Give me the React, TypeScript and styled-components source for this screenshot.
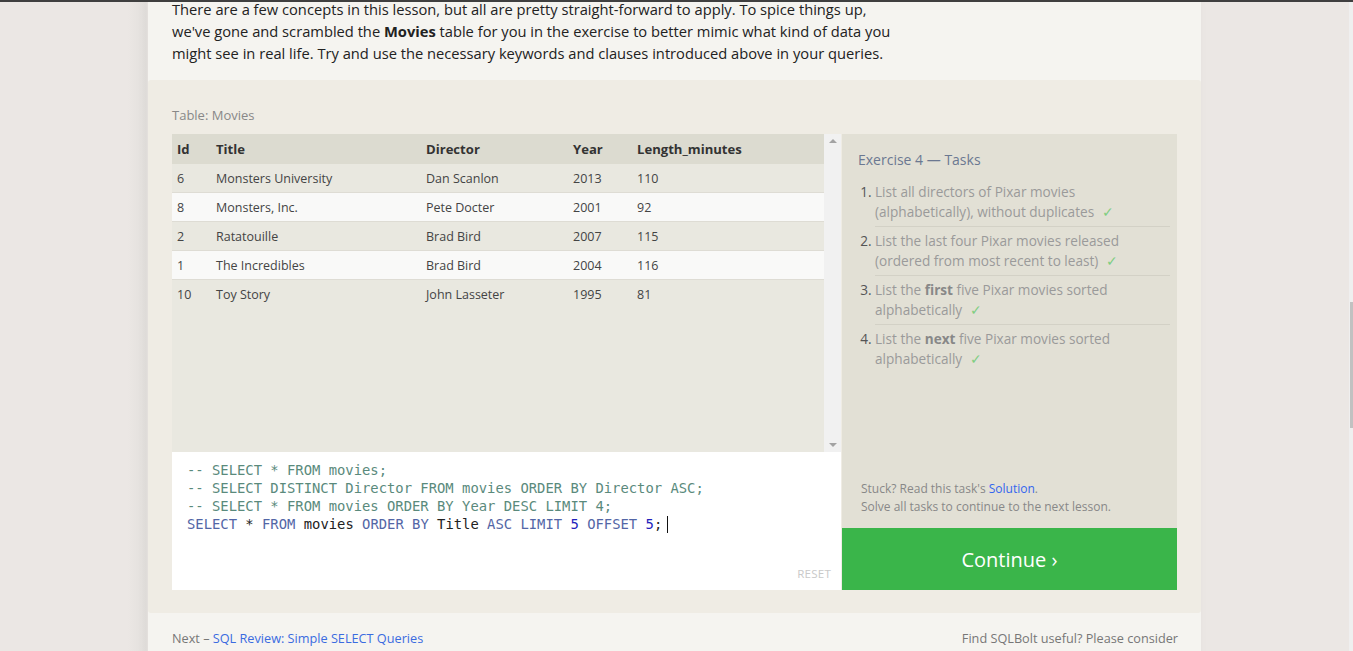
import React from "react";
import styled, { createGlobalStyle } from "styled-components";

const Global = createGlobalStyle`
  html, body { margin: 0; padding: 0; }
  body {
    background: #ebe7e4;
    font-family: "Open Sans", "Noto Sans", sans-serif;
    overflow: hidden;
    height: 651px;
  }
`;

const TopEdge = styled.div`
  position: fixed;
  top: 0;
  left: 0;
  right: 0;
  height: 2px;
  background: #3f3f3f;
  z-index: 10;
`;

const PageScroll = styled.div`
  position: fixed;
  top: 2px;
  right: 0;
  width: 4px;
  bottom: 0;
  background: #efefef;
  z-index: 10;
`;

const PageThumb = styled.div`
  position: absolute;
  right: 0;
  width: 3px;
  top: 300px;
  height: 126px;
  background: #c1c1c1;
`;

const Page = styled.div`
  display: flex;
  justify-content: flex-start;
  padding-left: 148px;
  background: linear-gradient(to right, #ebe7e4 0, #ebe7e4 128px, #e2dfdc 146px, #ebe7e4 148px);
`;

const Column = styled.div`
  width: 1053px;
  background: #f5f4f0;
  box-shadow: -2px 0 10px rgba(0, 0, 0, 0.04);
`;

const Intro = styled.p`
  margin: -2px 0 0 0;
  padding: 0 24px 16px 24px;
  width: 732px;
  font-size: 14.7px;
  line-height: 22px;
  color: #222;
`;

const Exercise = styled.section`
  background: #efece4;
  border-radius: 3px;
  padding: 26px 24px 23px 24px;
`;

const TableLabel = styled.div`
  font-size: 13px;
  line-height: 18px;
  color: #888;
  margin-bottom: 10px;
`;

const Workspace = styled.div`
  display: flex;
  justify-content: space-between;
`;

const LeftPane = styled.div`
  width: 669px;
  display: flex;
  flex-direction: column;
`;

const TableBox = styled.div`
  height: 318px;
  display: flex;
  background: #e9e8e0;
`;

const TableArea = styled.div`
  flex: 1;
`;

const DataTable = styled.table`
  width: 100%;
  border-collapse: collapse;
  font-size: 12.5px;
  color: #444;
`;

const HeadCell = styled.th<{ $w?: number }>`
  text-align: left;
  background: #dcdbd0;
  font-weight: 700;
  font-size: 13.1px;
  color: #333;
  height: 30px;
  padding: 0 5px;
  width: ${(p) => (p.$w ? `${p.$w}px` : "auto")};
  box-sizing: border-box;
`;

const Row = styled.tr<{ $light: boolean }>`
  background: ${(p) => (p.$light ? "#f9f9f8" : "#e9e8e0")};
  border-bottom: 1px solid #dedcd4;
  &:last-child { border-bottom-color: transparent; }
`;

const Cell = styled.td`
  height: 28px;
  padding: 0 5px;
  color: #444;
`;

const ScrollBar = styled.div`
  width: 17px;
  background: #f1f1f1;
  display: flex;
  flex-direction: column;
  justify-content: space-between;
  align-items: center;
  padding: 5px 0;
  box-sizing: border-box;
`;

const Arrow = styled.div<{ $down?: boolean }>`
  width: 0;
  height: 0;
  border-left: 4px solid transparent;
  border-right: 4px solid transparent;
  ${(p) =>
    p.$down
      ? "border-top: 4px solid #a3a3a3;"
      : "border-bottom: 4px solid #a3a3a3;"}
`;

const Editor = styled.div`
  height: 138px;
  background: #fff;
  position: relative;
  padding: 9px 15px;
  box-sizing: border-box;
`;

const Code = styled.pre`
  margin: 0;
  font-family: "DejaVu Sans Mono", "Liberation Mono", monospace;
  font-size: 13.85px;
  line-height: 18px;
  color: #222;
`;

const Comment = styled.span`
  color: #5a8a7c;
`;

const Kw = styled.span`
  color: #5366a6;
`;

const Num = styled.span`
  color: #2222bb;
`;

const Caret = styled.span`
  display: inline-block;
  width: 1px;
  height: 17px;
  background: #111;
  vertical-align: -4px;
  margin-left: 5px;
`;

const Reset = styled.div`
  position: absolute;
  right: 10px;
  bottom: 9px;
  font-size: 11.6px;
  color: #c9c9c9;
  letter-spacing: 0.2px;
`;

const RightPane = styled.div`
  width: 335px;
  display: flex;
  flex-direction: column;
`;

const Tasks = styled.div`
  flex: 1;
  background: #e2e0d5;
  padding: 17px 7px 12px 16px;
  display: flex;
  flex-direction: column;
`;

const TasksTitle = styled.h3`
  margin: 0 0 9px 0;
  font-weight: 400;
  font-size: 14px;
  line-height: 18px;
  color: #6b7891;
`;

const TaskList = styled.ol`
  margin: 0;
  padding: 0 0 0 17px;
  font-size: 13.6px;
  line-height: 20px;
  color: #9a9a9a;
`;

const Task = styled.li<{ $last?: boolean }>`
  padding: 4px 0 4px 0;
  border-bottom: ${(p) => (p.$last ? "none" : "1px solid #d3d1c6")};
  &::marker { color: #555; }
  b { color: #888; }
`;

const Check = styled.span`
  color: #7fce82;
  margin-left: 8px;
`;

const Stuck = styled.div`
  margin-top: auto;
  font-size: 12px;
  line-height: 18px;
  color: #888;
  padding-left: 3px;
  a { color: #3366ee; text-decoration: none; }
`;

const ContinueButton = styled.button`
  height: 62px;
  border: none;
  background: #3ab54a;
  color: #fff;
  font-family: inherit;
  font-size: 20px;
  cursor: pointer;
`;

const Footer = styled.footer`
  display: flex;
  justify-content: space-between;
  padding: 16px 23px 0 24px;
  font-size: 12.7px;
  line-height: 18px;
  color: #777;
  height: 38px;
  a { color: #3a6be0; text-decoration: none; }
`;

const rows = [
  ["6", "Monsters University", "Dan Scanlon", "2013", "110"],
  ["8", "Monsters, Inc.", "Pete Docter", "2001", "92"],
  ["2", "Ratatouille", "Brad Bird", "2007", "115"],
  ["1", "The Incredibles", "Brad Bird", "2004", "116"],
  ["10", "Toy Story", "John Lasseter", "1995", "81"],
];

export default function App() {
  return (
    <>
      <Global />
      <TopEdge />
      <PageScroll>
        <PageThumb />
      </PageScroll>
      <Page>
        <Column>
          <Intro>
            There are a few concepts in this lesson, but all are pretty straight-forward to apply. To
            spice things up, we've gone and scrambled the <b>Movies</b> table for you in the exercise
            to better mimic what kind of data you might see in real life. Try and use the necessary
            keywords and clauses introduced above in your queries.
          </Intro>
          <Exercise>
            <TableLabel>Table: Movies</TableLabel>
            <Workspace>
              <LeftPane>
                <TableBox>
                  <TableArea>
                    <DataTable>
                      <thead>
                        <tr>
                          <HeadCell $w={39}>Id</HeadCell>
                          <HeadCell $w={210}>Title</HeadCell>
                          <HeadCell $w={147}>Director</HeadCell>
                          <HeadCell $w={64}>Year</HeadCell>
                          <HeadCell>Length_minutes</HeadCell>
                        </tr>
                      </thead>
                      <tbody>
                        {rows.map((r, i) => (
                          <Row key={r[0]} $light={i % 2 === 1}>
                            {r.map((c, j) => (
                              <Cell key={j}>{c}</Cell>
                            ))}
                          </Row>
                        ))}
                      </tbody>
                    </DataTable>
                  </TableArea>
                  <ScrollBar>
                    <Arrow />
                    <Arrow $down />
                  </ScrollBar>
                </TableBox>
                <Editor>
                  <Code>
                    <Comment>-- SELECT * FROM movies;</Comment>
                    {"\n"}
                    <Comment>-- SELECT DISTINCT Director FROM movies ORDER BY Director ASC;</Comment>
                    {"\n"}
                    <Comment>-- SELECT * FROM movies ORDER BY Year DESC LIMIT 4;</Comment>
                    {"\n"}
                    <Kw>SELECT</Kw> * <Kw>FROM</Kw> movies <Kw>ORDER BY</Kw> Title <Kw>ASC</Kw>{" "}
                    <Kw>LIMIT</Kw> <Num>5</Num> <Kw>OFFSET</Kw> <Num>5</Num>;
                    <Caret />
                  </Code>
                  <Reset>RESET</Reset>
                </Editor>
              </LeftPane>
              <RightPane>
                <Tasks>
                  <TasksTitle>Exercise 4 — Tasks</TasksTitle>
                  <TaskList>
                    <Task>
                      List all directors of Pixar movies (alphabetically), without duplicates
                      <Check>✓</Check>
                    </Task>
                    <Task>
                      List the last four Pixar movies released (ordered from most recent to least)
                      <Check>✓</Check>
                    </Task>
                    <Task>
                      List the <b>first</b> five Pixar movies sorted alphabetically
                      <Check>✓</Check>
                    </Task>
                    <Task $last>
                      List the <b>next</b> five Pixar movies sorted alphabetically
                      <Check>✓</Check>
                    </Task>
                  </TaskList>
                  <Stuck>
                    Stuck? Read this task's <a href="#">Solution</a>.
                    <br />
                    Solve all tasks to continue to the next lesson.
                  </Stuck>
                </Tasks>
                <ContinueButton>Continue ›</ContinueButton>
              </RightPane>
            </Workspace>
          </Exercise>
          <Footer>
            <span>
              Next – <a href="#">SQL Review: Simple SELECT Queries</a>
            </span>
            <span>Find SQLBolt useful? Please consider</span>
          </Footer>
        </Column>
      </Page>
    </>
  );
}
